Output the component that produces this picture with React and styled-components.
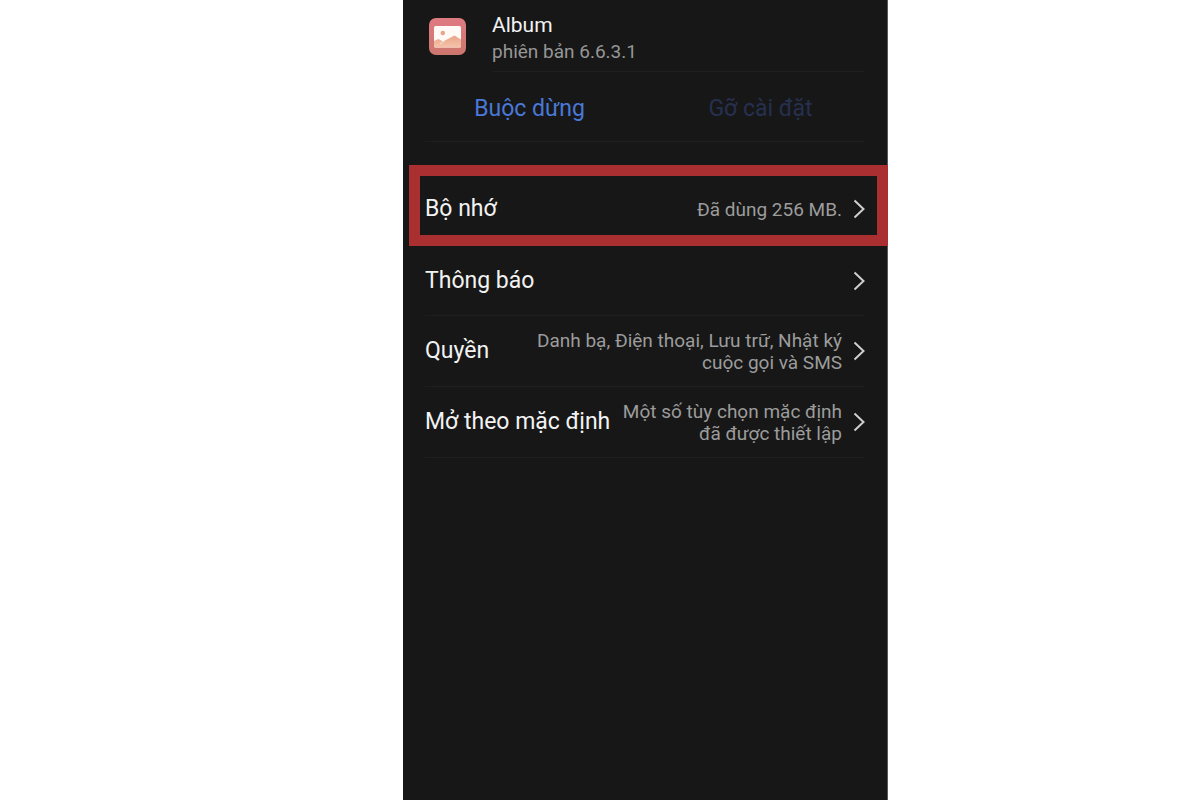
import React from 'react';
import styled, {createGlobalStyle} from 'styled-components';

const GlobalStyle = createGlobalStyle`
  * {
    box-sizing: border-box;
  }
  body {
    margin: 0;
    background: #ffffff;
    font-family: Roboto, "Liberation Sans", sans-serif;
  }
`;

const Page = styled.div`
  display: grid;
  grid-template-columns: 403fr minmax(440px, 485fr) 312fr;
  min-height: 100vh;
`;

const Screen = styled.main`
  grid-column: 2;
  background: #171717;
  border-right: 1px solid #58585a;
  color: #f2f2f2;
`;

const AppHeader = styled.header`
  display: flex;
  gap: 25px;
  padding: 0 22px 0 25px;
`;

const AppIcon = styled.svg`
  flex: none;
  width: 39px;
  height: 39px;
  margin-top: 17px;
`;

const AppMeta = styled.div`
  flex: 1;
  padding: 12px 0 5px;
  border-bottom: 1px solid #1f1f1f;
`;

const AppName = styled.h1`
  margin: 0;
  font-size: 21px;
  font-weight: 400;
  line-height: 26px;
`;

const AppVersion = styled.p`
  margin: 0;
  color: #969696;
  font-size: 19px;
  line-height: 28px;
`;

const Actions = styled.div`
  display: grid;
  grid-template-columns: 1fr 1fr;
  column-gap: 22px;
  margin: 0 22px;
  padding-top: 5px;
  border-bottom: 1px solid #1f1f1f;
`;

const ActionButton = styled.button`
  padding: 0;
  border: 0;
  background: transparent;
  color: #4a78d8;
  font-family: inherit;
  font-size: 23px;
  line-height: 64px;
  cursor: pointer;

  &:disabled {
    color: #26304f;
    cursor: default;
  }
`;

const Highlight = styled.div`
  margin: 23px -1px 0 6px;
  padding: 6px 12px 0 5px;
  border: 11px solid #a92f31;
`;

const List = styled.div`
  padding: 0 22px;
`;

const Row = styled.button`
  display: flex;
  align-items: center;
  width: 100%;
  min-height: ${props => props.$height}px;
  padding: 0;
  border: 0;
  border-bottom: ${props => props.$divided ? '1px solid #1f1f1f' : '0'};
  background: transparent;
  color: inherit;
  font-family: inherit;
  text-align: left;
  cursor: pointer;
`;

const RowTitle = styled.span`
  flex: none;
  font-size: 23px;
  line-height: 28px;
`;

const RowValue = styled.span`
  flex: 1;
  margin: 0 11px 0 8px;
  padding-top: 2px;
  color: #9c9c9c;
  font-size: 19px;
  line-height: 22px;
  text-align: right;
`;

const ChevronIcon = styled.svg`
  flex: none;
  width: 12px;
  height: 20px;
`;

const Chevron = () => (
  <ChevronIcon viewBox="0 0 12 20" fill="none" stroke="#cfcfcf" strokeWidth="2">
    <path d="M1.5 1.5 10.5 10 1.5 18.5" />
  </ChevronIcon>
);

const AlbumIcon = () => (
  <AppIcon viewBox="0 0 39 39" aria-hidden="true">
    <defs>
      <linearGradient id="tile" x1="0" y1="0" x2="0" y2="1">
        <stop offset="0" stopColor="#df7a82" />
        <stop offset="1" stopColor="#cc766d" />
      </linearGradient>
      <linearGradient id="hills" x1="0" y1="0" x2="0" y2="1">
        <stop offset="0" stopColor="#e9a588" />
        <stop offset="1" stopColor="#f5c3ab" />
      </linearGradient>
    </defs>
    <rect x="1" y="1" width="37" height="37" rx="7" fill="url(#tile)" />
    <rect x="6" y="9" width="27" height="21.5" rx="1.5" fill="#fffaf6" />
    <circle cx="14.8" cy="16" r="2.3" fill="#e6a58c" />
    <path
      d="M6 24 10.5 22 15 24.5 26.5 18.5 33 22.5V29Q33 30.5 31.5 30.5H7.5Q6 30.5 6 29Z"
      fill="url(#hills)"
    />
    <path d="M12 27 17 23.5" stroke="#fbe3d6" strokeWidth="1" />
  </AppIcon>
);

const SettingRow = ({title, value, height, divided}) => (
  <Row type="button" $height={height} $divided={divided}>
    <RowTitle>{title}</RowTitle>
    <RowValue>{value}</RowValue>
    <Chevron />
  </Row>
);

const App = () => (
  <Page>
    <GlobalStyle />
    <Screen>
      <AppHeader>
        <AlbumIcon />
        <AppMeta>
          <AppName>Album</AppName>
          <AppVersion>phiên bản 6.6.3.1</AppVersion>
        </AppMeta>
      </AppHeader>
      <Actions>
        <ActionButton type="button">Buộc dừng</ActionButton>
        <ActionButton type="button" disabled>Gỡ cài đặt</ActionButton>
      </Actions>
      <Highlight>
        <SettingRow title="Bộ nhớ" value="Đã dùng 256 MB." height={53} />
      </Highlight>
      <List>
        <SettingRow title="Thông báo" height={70} divided />
        <SettingRow
          title="Quyền"
          value="Danh bạ, Điện thoại, Lưu trữ, Nhật ký cuộc gọi và SMS"
          height={71}
          divided
        />
        <SettingRow
          title="Mở theo mặc định"
          value="Một số tùy chọn mặc định đã được thiết lập"
          height={71}
          divided
        />
      </List>
    </Screen>
  </Page>
);

export default App;
